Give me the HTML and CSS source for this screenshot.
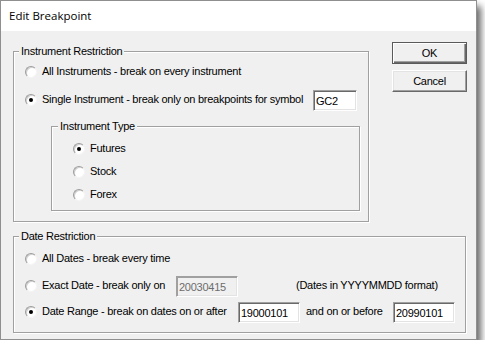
FILE: index.html
```html
<!DOCTYPE html>
<html lang="en">
<head>
    <meta charset="UTF-8">
    <meta name="viewport" content="width=device-width, initial-scale=1.0">
    <title>Edit Breakpoint</title>
    <link rel="stylesheet" href="styles.css">
</head>
<body>
    <div class="window">
        <div class="titlebar">Edit Breakpoint</div>
        <div class="client">
            <div class="top">
                <fieldset class="group group-instr">
                    <legend>Instrument Restriction</legend>
                    <div class="instr-body">
                        <label class="opt"><span class="radio"></span>All Instruments - break on every instrument</label>
                        <div class="row row-symbol">
                            <label class="opt lbl-symbol"><span class="radio on"></span>Single Instrument - break only on breakpoints for symbol</label>
                            <input class="field field-symbol" type="text" value="GC2">
                        </div>
                        <fieldset class="group group-type">
                            <legend>Instrument Type</legend>
                            <div class="type-body">
                                <label class="opt"><span class="radio on"></span>Futures</label>
                                <label class="opt"><span class="radio"></span>Stock</label>
                                <label class="opt"><span class="radio"></span>Forex</label>
                            </div>
                        </fieldset>
                    </div>
                </fieldset>
                <div class="buttons">
                    <button class="btn btn-default">OK</button>
                    <button class="btn">Cancel</button>
                </div>
            </div>

            <fieldset class="group group-date">
                <legend>Date Restriction</legend>
                <div class="date-body">
                    <label class="opt"><span class="radio"></span>All Dates - break every time</label>
                    <div class="row row-exact">
                        <label class="opt lbl-exact"><span class="radio"></span>Exact Date - break only on</label>
                        <input class="field field-date" type="text" value="20030415" disabled>
                        <span class="note">(Dates in YYYYMMDD format)</span>
                    </div>
                    <div class="row row-range">
                        <label class="opt lbl-range"><span class="radio on"></span>Date Range - break on dates on or after</label>
                        <input class="field field-date" type="text" value="19000101">
                        <span class="between">and on or before</span>
                        <input class="field field-date" type="text" value="20990101">
                    </div>
                </div>
            </fieldset>
        </div>
    </div>
</body>
</html>
```

FILE: styles.css
```css
body {
    margin: 0;
    background-color: #ffffff;
    font-family: 'Liberation Sans', Arial, sans-serif;
    font-size: 11px;
    letter-spacing: -0.25px;
    color: #000;
}
.window {
    width: 477px;
    height: 340px;
    box-sizing: border-box;
    border: 1px solid #8f8f8f;
    background-color: #f0f0f0;
    box-shadow: 4px 6px 7px rgba(0, 0, 0, 0.6);
}
.titlebar {
    height: 30px;
    line-height: 30px;
    padding-left: 8px;
    background-color: #ffffff;
    font-family: 'Open Sans', 'Noto Sans', sans-serif;
    font-size: 11.5px;
    letter-spacing: 0;
}
.client {
    padding: 11px 0 0 12px;
}
.top {
    display: flex;
    align-items: flex-start;
}

/* etched group boxes */
.group {
    margin: 0;
    padding: 0;
    min-width: 0;
    border: 1px solid #a0a0a0;
    box-shadow: 1px 1px 0 #ffffff, inset 1px 1px 0 #ffffff;
}
.group legend {
    margin-left: 5px;
    padding: 0 2px;
    line-height: 13px;
    background-color: #f0f0f0;
}
.group-instr {
    width: 354px;
    margin-top: 3px;
}
.instr-body {
    padding: 7px 0 10px 11px;
}
.group-type {
    width: 307px;
    margin: 9px 0 0 26px;
}
.group-type legend {
    margin-left: 6px;
}
.type-body {
    display: flex;
    flex-direction: column;
    gap: 10px;
    padding: 9px 0 9px 21px;
}
.group-date {
    width: 451px;
    margin-top: 8px;
}
.date-body {
    padding: 9px 0 9px 11px;
}

/* radio options */
.opt {
    display: flex;
    align-items: center;
    gap: 5px;
    height: 13px;
    line-height: 13px;
    white-space: nowrap;
    flex: none;
}
.radio {
    display: flex;
    align-items: center;
    justify-content: center;
    width: 12px;
    height: 12px;
    box-sizing: border-box;
    border-radius: 50%;
    border: 1px solid;
    border-color: #9c9c9c #f4f4f4 #f4f4f4 #9c9c9c;
    background-color: #ffffff;
    box-shadow: inset 1px 1px 0 #d0d0d0;
}
.radio.on::after {
    content: '';
    width: 4px;
    height: 4px;
    border-radius: 50%;
    background-color: #000;
}

.row {
    display: flex;
    align-items: flex-start;
}
.row .opt {
    margin-top: 3px;
}
.row-symbol {
    margin-top: 12px;
}
.row-exact {
    margin-top: 11px;
}
.row-range {
    margin-top: 5px;
}
.lbl-symbol {
    width: 288px;
}
.lbl-exact {
    width: 151px;
}
.lbl-range {
    width: 213px;
}

/* sunken edit fields */
.field {
    height: 21px;
    box-sizing: border-box;
    margin: 0;
    padding: 1px 2px 0;
    border: 1px solid;
    border-color: #a0a0a0 #ffffff #ffffff #a0a0a0;
    box-shadow: inset 1px 1px 0 #696969, inset -1px -1px 0 #e3e3e3;
    background-color: #ffffff;
    font-family: inherit;
    font-size: 11px;
    letter-spacing: -0.25px;
    color: #000;
    outline: none;
}
.field-symbol {
    width: 44px;
}
.field-date {
    width: 62px;
}
.field:disabled {
    background-color: #f0f0f0;
    color: #6d6d6d;
    box-shadow: inset 1px 1px 0 #a0a0a0, inset -1px -1px 0 #e3e3e3;
}
.note {
    margin: 3px 0 0 58px;
    line-height: 13px;
    white-space: nowrap;
}
.between {
    width: 87px;
    margin: 3px 0 0 6px;
    line-height: 13px;
    white-space: nowrap;
}

/* push buttons */
.buttons {
    display: flex;
    flex-direction: column;
    gap: 6px;
    margin-left: 23px;
}
.btn {
    width: 75px;
    height: 22px;
    margin: 0;
    padding: 0;
    box-sizing: border-box;
    border: 1px solid;
    border-color: #ffffff #696969 #696969 #ffffff;
    box-shadow: inset -1px -1px 0 #a0a0a0, inset 1px 1px 0 #e3e3e3;
    background-color: #f0f0f0;
    font-family: inherit;
    font-size: 11px;
    letter-spacing: -0.25px;
    color: #000;
}
.btn-default {
    border: 1px solid #5a5a5a;
    box-shadow: inset 1px 1px 0 #ffffff, inset -1px -1px 0 #696969, inset -2px -2px 0 #a0a0a0;
}
```
